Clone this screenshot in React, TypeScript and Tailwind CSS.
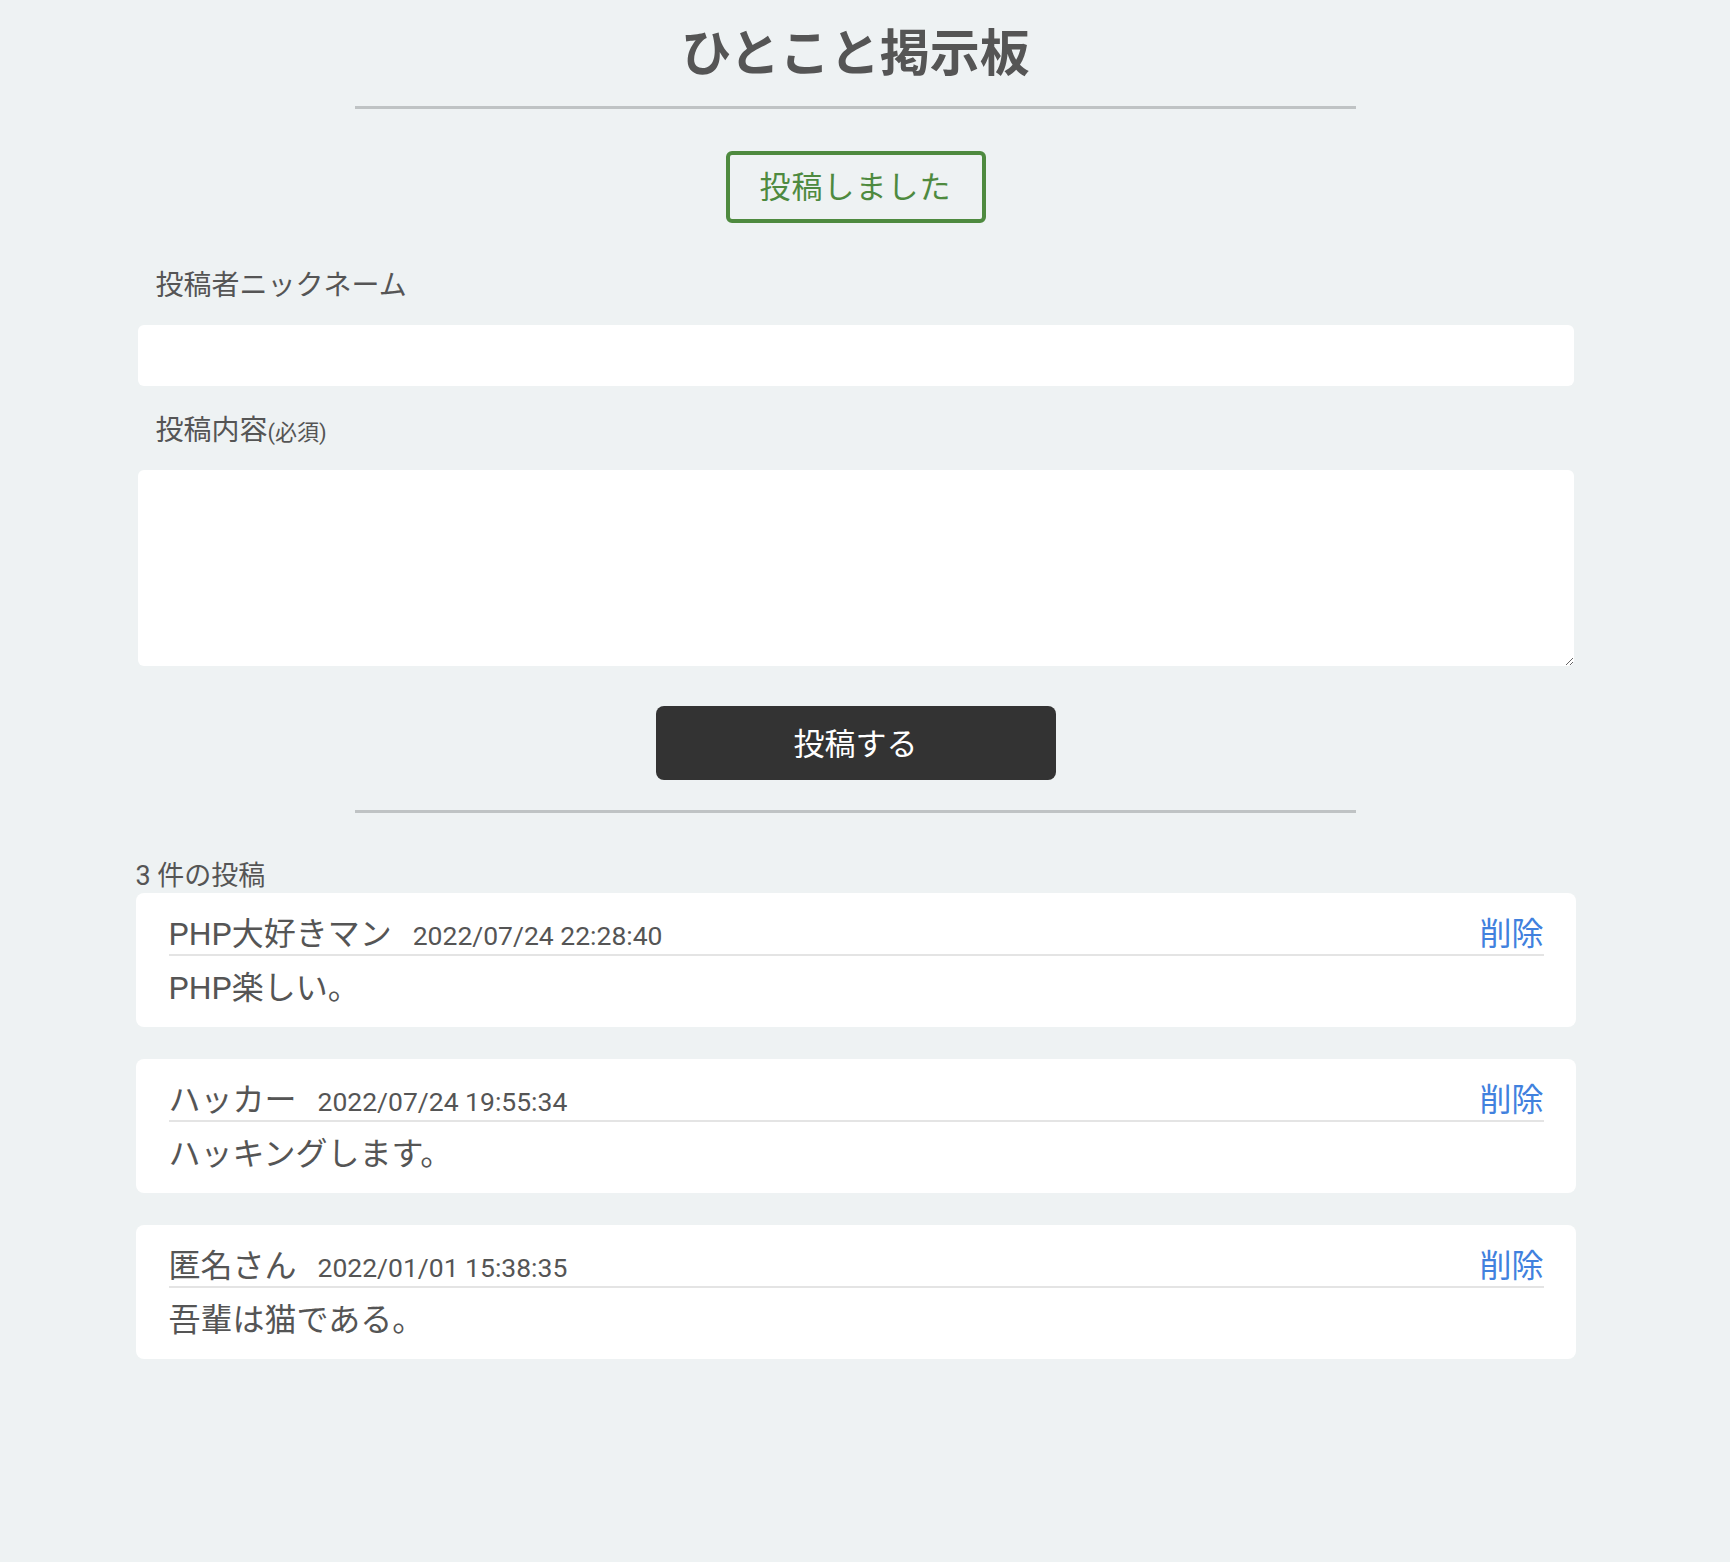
import React from "react";

const posts = [
  { name: "PHP大好きマン", date: "2022/07/24 22:28:40", body: "PHP楽しい。" },
  { name: "ハッカー", date: "2022/07/24 19:55:34", body: "ハッキングします。" },
  { name: "匿名さん", date: "2022/01/01 15:38:35", body: "吾輩は猫である。" },
];

export default function App() {
  return (
    <div className="min-h-[1562px] bg-[#eef2f3] text-[#555] font-['Roboto','Noto_Sans_CJK_JP',sans-serif]">
      <div className="w-[1711px]">
        <div className="mx-auto w-[1440px] flex flex-col">
          <h1 className="pt-[26px] text-center text-[50px] font-bold leading-[56px] text-[#555]">ひとこと掲示板</h1>
          <div className="mx-auto mt-[24px] h-[3px] w-[1001px] bg-[#bfc3c4]" />
          <div className="mx-auto mt-[42px] flex h-[72px] w-[260px] items-center justify-center rounded-[6px] border-[4px] border-[#4e8a3f] text-[31px] leading-none tracking-[1px] text-[#4e8a3f]">
            投稿しました
          </div>
          <label className="mt-[45px] pl-[20px] text-[28px] leading-[36px]">投稿者ニックネーム</label>
          <input className="mt-[21px] ml-[2px] h-[61px] w-[1436px] rounded-[6px] bg-white px-4 text-[27px] outline-none" />
          <label className="mt-[27px] pl-[20px] text-[28px] leading-[36px]">
            投稿内容<span className="text-[22px]">(必須)</span>
          </label>
          <textarea className="mt-[19px] ml-[2px] h-[196px] w-[1436px] rounded-[6px] bg-white p-4 text-[27px] outline-none" />
          <button className="mx-auto mt-[40px] flex h-[74px] w-[400px] items-center justify-center rounded-[8px] bg-[#333] pt-[5px] text-[31px] text-white">
            投稿する
          </button>
          <div className="mx-auto mt-[30px] h-[3px] w-[1001px] bg-[#bfc3c4]" />
          <div className="mt-[46px] text-[27px] leading-[34px]">3 件の投稿</div>
          <div className="flex flex-col gap-[32px]">
            {posts.map((p) => (
              <div key={p.date} className="h-[134px] rounded-[8px] bg-white pl-[33px] pr-[32px] pt-[23px]">
                <div className="flex items-baseline justify-between border-b-2 border-[#e4e4e4]">
                  <div className="flex items-baseline">
                    <span className="text-[32px] leading-[36px]">{p.name}</span>
                    <span className="ml-[21px] text-[26.5px] leading-[36px]">{p.date}</span>
                  </div>
                  <span className="text-[32px] leading-[36px] text-[#4181de]">削除</span>
                </div>
                <div className="mt-[12px] text-[32px] leading-[40px]">{p.body}</div>
              </div>
            ))}
          </div>
        </div>
      </div>
    </div>
  );
}
